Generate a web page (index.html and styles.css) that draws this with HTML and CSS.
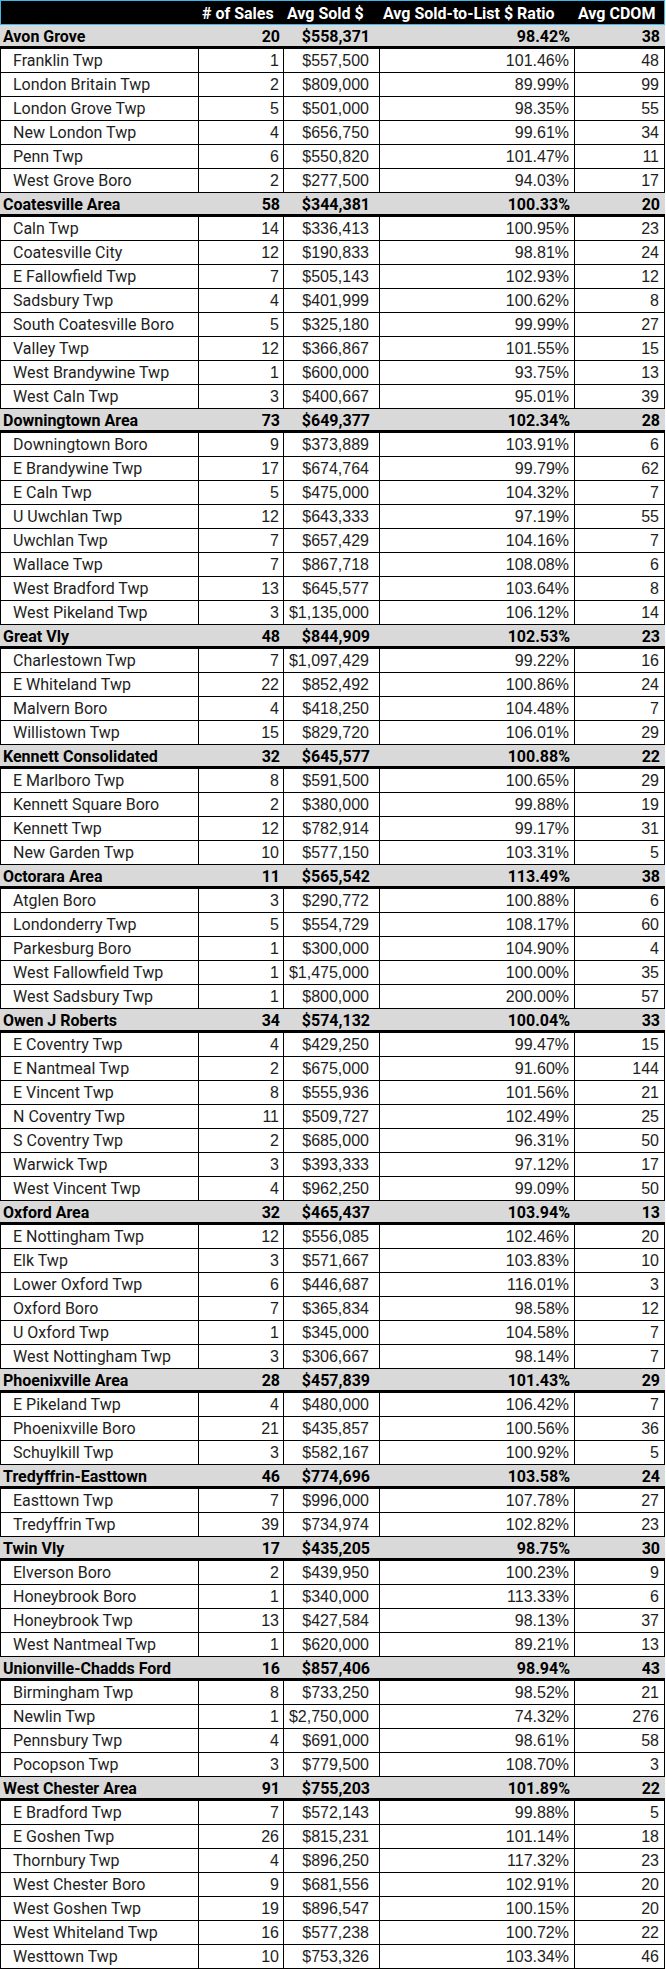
FILE: index.html
```html
<!DOCTYPE html>
<html lang="en">
<head>
<meta charset="utf-8">
<title>Sales by School District</title>
<link rel="stylesheet" href="styles.css">
</head>
<body>
<table class="sheet">
<thead>
<tr class="hdr"><th></th><th># of Sales</th><th>Avg Sold $</th><th>Avg Sold-to-List $ Ratio</th><th>Avg CDOM</th></tr>
</thead>
<tbody>
<tr class="grp"><td>Avon Grove</td><td>20</td><td>$558,371</td><td>98.42%</td><td>38</td></tr>
<tr class="row"><td>Franklin Twp</td><td>1</td><td>$557,500</td><td>101.46%</td><td>48</td></tr>
<tr class="row"><td>London Britain Twp</td><td>2</td><td>$809,000</td><td>89.99%</td><td>99</td></tr>
<tr class="row"><td>London Grove Twp</td><td>5</td><td>$501,000</td><td>98.35%</td><td>55</td></tr>
<tr class="row"><td>New London Twp</td><td>4</td><td>$656,750</td><td>99.61%</td><td>34</td></tr>
<tr class="row"><td>Penn Twp</td><td>6</td><td>$550,820</td><td>101.47%</td><td>11</td></tr>
<tr class="row"><td>West Grove Boro</td><td>2</td><td>$277,500</td><td>94.03%</td><td>17</td></tr>
<tr class="grp"><td>Coatesville Area</td><td>58</td><td>$344,381</td><td>100.33%</td><td>20</td></tr>
<tr class="row"><td>Caln Twp</td><td>14</td><td>$336,413</td><td>100.95%</td><td>23</td></tr>
<tr class="row"><td>Coatesville City</td><td>12</td><td>$190,833</td><td>98.81%</td><td>24</td></tr>
<tr class="row"><td>E Fallowfield Twp</td><td>7</td><td>$505,143</td><td>102.93%</td><td>12</td></tr>
<tr class="row"><td>Sadsbury Twp</td><td>4</td><td>$401,999</td><td>100.62%</td><td>8</td></tr>
<tr class="row"><td>South Coatesville Boro</td><td>5</td><td>$325,180</td><td>99.99%</td><td>27</td></tr>
<tr class="row"><td>Valley Twp</td><td>12</td><td>$366,867</td><td>101.55%</td><td>15</td></tr>
<tr class="row"><td>West Brandywine Twp</td><td>1</td><td>$600,000</td><td>93.75%</td><td>13</td></tr>
<tr class="row"><td>West Caln Twp</td><td>3</td><td>$400,667</td><td>95.01%</td><td>39</td></tr>
<tr class="grp"><td>Downingtown Area</td><td>73</td><td>$649,377</td><td>102.34%</td><td>28</td></tr>
<tr class="row"><td>Downingtown Boro</td><td>9</td><td>$373,889</td><td>103.91%</td><td>6</td></tr>
<tr class="row"><td>E Brandywine Twp</td><td>17</td><td>$674,764</td><td>99.79%</td><td>62</td></tr>
<tr class="row"><td>E Caln Twp</td><td>5</td><td>$475,000</td><td>104.32%</td><td>7</td></tr>
<tr class="row"><td>U Uwchlan Twp</td><td>12</td><td>$643,333</td><td>97.19%</td><td>55</td></tr>
<tr class="row"><td>Uwchlan Twp</td><td>7</td><td>$657,429</td><td>104.16%</td><td>7</td></tr>
<tr class="row"><td>Wallace Twp</td><td>7</td><td>$867,718</td><td>108.08%</td><td>6</td></tr>
<tr class="row"><td>West Bradford Twp</td><td>13</td><td>$645,577</td><td>103.64%</td><td>8</td></tr>
<tr class="row"><td>West Pikeland Twp</td><td>3</td><td>$1,135,000</td><td>106.12%</td><td>14</td></tr>
<tr class="grp"><td>Great Vly</td><td>48</td><td>$844,909</td><td>102.53%</td><td>23</td></tr>
<tr class="row"><td>Charlestown Twp</td><td>7</td><td>$1,097,429</td><td>99.22%</td><td>16</td></tr>
<tr class="row"><td>E Whiteland Twp</td><td>22</td><td>$852,492</td><td>100.86%</td><td>24</td></tr>
<tr class="row"><td>Malvern Boro</td><td>4</td><td>$418,250</td><td>104.48%</td><td>7</td></tr>
<tr class="row"><td>Willistown Twp</td><td>15</td><td>$829,720</td><td>106.01%</td><td>29</td></tr>
<tr class="grp"><td>Kennett Consolidated</td><td>32</td><td>$645,577</td><td>100.88%</td><td>22</td></tr>
<tr class="row"><td>E Marlboro Twp</td><td>8</td><td>$591,500</td><td>100.65%</td><td>29</td></tr>
<tr class="row"><td>Kennett Square Boro</td><td>2</td><td>$380,000</td><td>99.88%</td><td>19</td></tr>
<tr class="row"><td>Kennett Twp</td><td>12</td><td>$782,914</td><td>99.17%</td><td>31</td></tr>
<tr class="row"><td>New Garden Twp</td><td>10</td><td>$577,150</td><td>103.31%</td><td>5</td></tr>
<tr class="grp"><td>Octorara Area</td><td>11</td><td>$565,542</td><td>113.49%</td><td>38</td></tr>
<tr class="row"><td>Atglen Boro</td><td>3</td><td>$290,772</td><td>100.88%</td><td>6</td></tr>
<tr class="row"><td>Londonderry Twp</td><td>5</td><td>$554,729</td><td>108.17%</td><td>60</td></tr>
<tr class="row"><td>Parkesburg Boro</td><td>1</td><td>$300,000</td><td>104.90%</td><td>4</td></tr>
<tr class="row"><td>West Fallowfield Twp</td><td>1</td><td>$1,475,000</td><td>100.00%</td><td>35</td></tr>
<tr class="row"><td>West Sadsbury Twp</td><td>1</td><td>$800,000</td><td>200.00%</td><td>57</td></tr>
<tr class="grp"><td>Owen J Roberts</td><td>34</td><td>$574,132</td><td>100.04%</td><td>33</td></tr>
<tr class="row"><td>E Coventry Twp</td><td>4</td><td>$429,250</td><td>99.47%</td><td>15</td></tr>
<tr class="row"><td>E Nantmeal Twp</td><td>2</td><td>$675,000</td><td>91.60%</td><td>144</td></tr>
<tr class="row"><td>E Vincent Twp</td><td>8</td><td>$555,936</td><td>101.56%</td><td>21</td></tr>
<tr class="row"><td>N Coventry Twp</td><td>11</td><td>$509,727</td><td>102.49%</td><td>25</td></tr>
<tr class="row"><td>S Coventry Twp</td><td>2</td><td>$685,000</td><td>96.31%</td><td>50</td></tr>
<tr class="row"><td>Warwick Twp</td><td>3</td><td>$393,333</td><td>97.12%</td><td>17</td></tr>
<tr class="row"><td>West Vincent Twp</td><td>4</td><td>$962,250</td><td>99.09%</td><td>50</td></tr>
<tr class="grp"><td>Oxford Area</td><td>32</td><td>$465,437</td><td>103.94%</td><td>13</td></tr>
<tr class="row"><td>E Nottingham Twp</td><td>12</td><td>$556,085</td><td>102.46%</td><td>20</td></tr>
<tr class="row"><td>Elk Twp</td><td>3</td><td>$571,667</td><td>103.83%</td><td>10</td></tr>
<tr class="row"><td>Lower Oxford Twp</td><td>6</td><td>$446,687</td><td>116.01%</td><td>3</td></tr>
<tr class="row"><td>Oxford Boro</td><td>7</td><td>$365,834</td><td>98.58%</td><td>12</td></tr>
<tr class="row"><td>U Oxford Twp</td><td>1</td><td>$345,000</td><td>104.58%</td><td>7</td></tr>
<tr class="row"><td>West Nottingham Twp</td><td>3</td><td>$306,667</td><td>98.14%</td><td>7</td></tr>
<tr class="grp"><td>Phoenixville Area</td><td>28</td><td>$457,839</td><td>101.43%</td><td>29</td></tr>
<tr class="row"><td>E Pikeland Twp</td><td>4</td><td>$480,000</td><td>106.42%</td><td>7</td></tr>
<tr class="row"><td>Phoenixville Boro</td><td>21</td><td>$435,857</td><td>100.56%</td><td>36</td></tr>
<tr class="row"><td>Schuylkill Twp</td><td>3</td><td>$582,167</td><td>100.92%</td><td>5</td></tr>
<tr class="grp"><td>Tredyffrin-Easttown</td><td>46</td><td>$774,696</td><td>103.58%</td><td>24</td></tr>
<tr class="row"><td>Easttown Twp</td><td>7</td><td>$996,000</td><td>107.78%</td><td>27</td></tr>
<tr class="row"><td>Tredyffrin Twp</td><td>39</td><td>$734,974</td><td>102.82%</td><td>23</td></tr>
<tr class="grp"><td>Twin Vly</td><td>17</td><td>$435,205</td><td>98.75%</td><td>30</td></tr>
<tr class="row"><td>Elverson Boro</td><td>2</td><td>$439,950</td><td>100.23%</td><td>9</td></tr>
<tr class="row"><td>Honeybrook Boro</td><td>1</td><td>$340,000</td><td>113.33%</td><td>6</td></tr>
<tr class="row"><td>Honeybrook Twp</td><td>13</td><td>$427,584</td><td>98.13%</td><td>37</td></tr>
<tr class="row"><td>West Nantmeal Twp</td><td>1</td><td>$620,000</td><td>89.21%</td><td>13</td></tr>
<tr class="grp"><td>Unionville-Chadds Ford</td><td>16</td><td>$857,406</td><td>98.94%</td><td>43</td></tr>
<tr class="row"><td>Birmingham Twp</td><td>8</td><td>$733,250</td><td>98.52%</td><td>21</td></tr>
<tr class="row"><td>Newlin Twp</td><td>1</td><td>$2,750,000</td><td>74.32%</td><td>276</td></tr>
<tr class="row"><td>Pennsbury Twp</td><td>4</td><td>$691,000</td><td>98.61%</td><td>58</td></tr>
<tr class="row"><td>Pocopson Twp</td><td>3</td><td>$779,500</td><td>108.70%</td><td>3</td></tr>
<tr class="grp"><td>West Chester Area</td><td>91</td><td>$755,203</td><td>101.89%</td><td>22</td></tr>
<tr class="row"><td>E Bradford Twp</td><td>7</td><td>$572,143</td><td>99.88%</td><td>5</td></tr>
<tr class="row"><td>E Goshen Twp</td><td>26</td><td>$815,231</td><td>101.14%</td><td>18</td></tr>
<tr class="row"><td>Thornbury Twp</td><td>4</td><td>$896,250</td><td>117.32%</td><td>23</td></tr>
<tr class="row"><td>West Chester Boro</td><td>9</td><td>$681,556</td><td>102.91%</td><td>20</td></tr>
<tr class="row"><td>West Goshen Twp</td><td>19</td><td>$896,547</td><td>100.15%</td><td>20</td></tr>
<tr class="row"><td>West Whiteland Twp</td><td>16</td><td>$577,238</td><td>100.72%</td><td>22</td></tr>
<tr class="row"><td>Westtown Twp</td><td>10</td><td>$753,326</td><td>103.34%</td><td>46</td></tr>
</tbody>
</table>
</body>
</html>
```
FILE: styles.css
```css
html, body {
  margin: 0;
  padding: 0;
  background: #ffffff;
}

.sheet {
  display: block;
  width: 665px;
  border-spacing: 0;
  font-family: "Liberation Sans", Arial, sans-serif;
  font-size: 16px;
}

.sheet thead,
.sheet tbody {
  display: block;
}

.sheet tr {
  display: grid;
  grid-template-columns: 199px 85px 96px 195px 90px;
  box-sizing: border-box;
  width: 665px;
}

.sheet th,
.sheet td {
  display: block;
  box-sizing: border-box;
  padding: 0;
  white-space: nowrap;
  overflow: hidden;
}

/* header */
.hdr {
  height: 25px;
  background: #000000;
  border: 1px solid #3fb5e8;
  grid-template-columns: 198px 85px 96px 195px 89px !important;
}

.hdr th {
  height: 23px;
  color: #ffffff;
  font-family: Roboto, "Liberation Sans", sans-serif;
  font-weight: 700;
  font-size: 16px;
  line-height: 23px;
  padding-top: 1px;
  text-align: left;
  padding-left: 3px;
}

/* group rows */
.grp {
  height: 24px;
  background: #d9d9d9;
  border-bottom: 3px solid #000000;
}

.grp td {
  height: 21px;
  color: #000000;
  font-family: Roboto, "Liberation Sans", sans-serif;
  font-weight: 700;
  line-height: 23px;
  text-align: right;
}

.grp td:first-child {
  text-align: left;
  padding-left: 3px;
}

/* detail rows */
.row td {
  height: 24px;
  color: #1e1e1e;
  line-height: 24px;
  text-align: right;
  border-right: 1px solid #000000;
  border-bottom: 1px solid #000000;
}

.row td:first-child {
  text-align: left;
  padding-left: 12px;
  border-left: 1px solid #000000;
  font-family: Roboto, "Liberation Sans", sans-serif;
}

.sheet td:nth-child(2) { padding-right: 4px; }
.sheet td:nth-child(3) { padding-right: 10px; }
.sheet td:nth-child(4) { padding-right: 5px; }
.sheet td:nth-child(5) { padding-right: 5px; }
```
